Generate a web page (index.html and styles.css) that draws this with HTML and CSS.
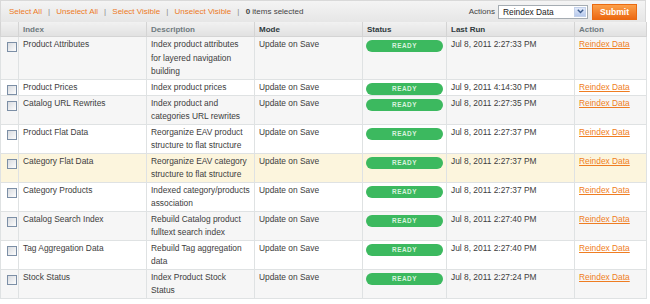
FILE: index.html
```html
<!DOCTYPE html>
<html lang="en">
<head>
  <meta charset="UTF-8">
  <title>Index Management</title>
  <link rel="stylesheet" href="styles.css">
</head>
<body>

  <div class="grid">

    <!-- MASSACTION BAR -->
    <div class="massaction">
      <div class="mass-links">
        <a href="#">Select All</a><span class="sep">|</span>
        <a href="#">Unselect All</a><span class="sep">|</span>
        <a href="#">Select Visible</a><span class="sep">|</span>
        <a href="#">Unselect Visible</a><span class="sep">|</span>
        <span class="count"><b>0</b> items selected</span>
      </div>
      <div class="mass-form">
        <span class="mass-label">Actions</span>
        <div class="select">
          <span>Reindex Data</span>
          <span class="select-arrow">
            <svg width="7" height="5" viewBox="0 0 7 5"><path d="M0.8 0.8 L3.5 3.6 L6.2 0.8" fill="none" stroke="#3a5a8c" stroke-width="1.4"/></svg>
          </span>
        </div>
        <button class="submit-btn" type="button">Submit</button>
      </div>
    </div>

    <!-- GRID TABLE -->
    <table class="data">
      <colgroup>
        <col class="c-check">
        <col class="c-index">
        <col class="c-desc">
        <col class="c-mode">
        <col class="c-status">
        <col class="c-run">
        <col class="c-action">
      </colgroup>
      <thead>
        <tr>
          <th></th>
          <th class="muted">Index</th>
          <th class="muted">Description</th>
          <th>Mode</th>
          <th>Status</th>
          <th>Last Run</th>
          <th class="muted">Action</th>
        </tr>
      </thead>
      <tbody>
        <tr class="even">
          <td><input type="checkbox" class="check"></td>
          <td>Product Attributes</td>
          <td>Index product attributes<br>for layered navigation building</td>
          <td>Update on Save</td>
          <td class="status-cell"><span class="status">READY</span></td>
          <td>Jul 8, 2011 2:27:33 PM</td>
          <td><a href="#" class="reindex">Reindex Data</a></td>
        </tr>
        <tr>
          <td><input type="checkbox" class="check"></td>
          <td>Product Prices</td>
          <td>Index product prices</td>
          <td>Update on Save</td>
          <td class="status-cell"><span class="status">READY</span></td>
          <td>Jul 9, 2011 4:14:30 PM</td>
          <td><a href="#" class="reindex">Reindex Data</a></td>
        </tr>
        <tr class="even">
          <td><input type="checkbox" class="check"></td>
          <td>Catalog URL Rewrites</td>
          <td>Index product and categories URL rewrites</td>
          <td>Update on Save</td>
          <td class="status-cell"><span class="status">READY</span></td>
          <td>Jul 8, 2011 2:27:35 PM</td>
          <td><a href="#" class="reindex">Reindex Data</a></td>
        </tr>
        <tr>
          <td><input type="checkbox" class="check"></td>
          <td>Product Flat Data</td>
          <td>Reorganize EAV product structure to flat structure</td>
          <td>Update on Save</td>
          <td class="status-cell"><span class="status">READY</span></td>
          <td>Jul 8, 2011 2:27:37 PM</td>
          <td><a href="#" class="reindex">Reindex Data</a></td>
        </tr>
        <tr class="hover">
          <td><input type="checkbox" class="check"></td>
          <td>Category Flat Data</td>
          <td>Reorganize EAV category structure to flat structure</td>
          <td>Update on Save</td>
          <td class="status-cell"><span class="status">READY</span></td>
          <td>Jul 8, 2011 2:27:37 PM</td>
          <td><a href="#" class="reindex">Reindex Data</a></td>
        </tr>
        <tr>
          <td><input type="checkbox" class="check"></td>
          <td>Category Products</td>
          <td>Indexed category/products association</td>
          <td>Update on Save</td>
          <td class="status-cell"><span class="status">READY</span></td>
          <td>Jul 8, 2011 2:27:37 PM</td>
          <td><a href="#" class="reindex">Reindex Data</a></td>
        </tr>
        <tr class="even">
          <td><input type="checkbox" class="check"></td>
          <td>Catalog Search Index</td>
          <td>Rebuild Catalog product fulltext search index</td>
          <td>Update on Save</td>
          <td class="status-cell"><span class="status">READY</span></td>
          <td>Jul 8, 2011 2:27:40 PM</td>
          <td><a href="#" class="reindex">Reindex Data</a></td>
        </tr>
        <tr>
          <td><input type="checkbox" class="check"></td>
          <td>Tag Aggregation Data</td>
          <td>Rebuild Tag aggregation data</td>
          <td>Update on Save</td>
          <td class="status-cell"><span class="status">READY</span></td>
          <td>Jul 8, 2011 2:27:40 PM</td>
          <td><a href="#" class="reindex">Reindex Data</a></td>
        </tr>
        <tr class="even">
          <td><input type="checkbox" class="check"></td>
          <td>Stock Status</td>
          <td>Index Product Stock Status</td>
          <td>Update on Save</td>
          <td class="status-cell"><span class="status">READY</span></td>
          <td>Jul 8, 2011 2:27:24 PM</td>
          <td><a href="#" class="reindex">Reindex Data</a></td>
        </tr>
      </tbody>
    </table>

  </div>

</body>
</html>
```

FILE: styles.css
```css
body {
  margin: 0;
  font-family: 'Liberation Sans', Arial, Helvetica, sans-serif;
  font-size: 8.4px;
  color: #3d3d3d;
  background-color: #fff;
}

.grid {
  width: 646px;
}

/* massaction bar */
.massaction {
  display: flex;
  align-items: center;
  justify-content: space-between;
  height: 21px;
  padding: 0 8px 0 8px;
  border: 1px solid #d9d9d9;
  border-bottom: none;
  background: linear-gradient(#f4f4f4, #e6e6e6);
  font-size: 8px;
}

.mass-links a {
  color: #ec7a1f;
  text-decoration: none;
}

.sep {
  color: #8a8a8a;
  margin: 0 4px 0 6px;
}

.count {
  color: #444;
}

.mass-form {
  display: flex;
  align-items: center;
}

.mass-label {
  color: #444;
  margin-right: 3px;
}

.select {
  box-sizing: border-box;
  width: 90px;
  height: 14px;
  display: flex;
  align-items: center;
  justify-content: space-between;
  padding: 0 1px 0 4px;
  border: 1px solid #a5acb2;
  background-color: #fff;
  font-size: 8.4px;
  color: #222;
}

.select-arrow {
  width: 12px;
  height: 10px;
  display: flex;
  align-items: center;
  justify-content: center;
  background: linear-gradient(#e2eafa, #b6c9ec);
  border: 1px solid #c3d1ea;
  box-sizing: border-box;
}

.submit-btn {
  width: 45px;
  height: 16px;
  margin-left: 4px;
  padding: 0;
  border: 1px solid #ea6a10;
  background: linear-gradient(#fca04a, #ec6812);
  color: #fff;
  font-family: inherit;
  font-size: 8.6px;
  font-weight: bold;
}

/* table */
.data {
  width: 646px;
  border-collapse: collapse;
  table-layout: fixed;
}

.c-check { width: 18px; }
.c-index { width: 128px; }
.c-desc { width: 108px; }
.c-mode { width: 108px; }
.c-status { width: 84px; }
.c-run { width: 128px; }
.c-action { width: 72px; }

.data th {
  height: 14px;
  padding: 0 4px;
  text-align: left;
  font-size: 8px;
  font-weight: bold;
  color: #2f3a40;
  background: linear-gradient(#f1f1f1, #e1e1e1);
  border: 1px solid #d4d4d4;
  border-top: none;
}

.data th.muted {
  color: #6f7a80;
}

.data td {
  padding: 1px 3px 0 4px;
  line-height: 13.5px;
  vertical-align: top;
  border: 1px solid #dfe2e3;
  border-top: none;
}

.data tr.even td {
  background-color: #f6f6f6;
}

.data tr.hover td {
  background-color: #fcf5dd;
}

.check {
  appearance: none;
  display: block;
  width: 10px;
  height: 10px;
  margin: 4px 0 0 2px;
  border: 1px solid #7c8fa6;
  background: linear-gradient(135deg, #d8dbe0, #fdfdfd);
}

.data td.status-cell {
  padding-left: 3px;
  padding-right: 3px;
}

.status {
  display: block;
  height: 12px;
  margin-top: 2px;
  line-height: 12px;
  border-radius: 6px;
  background-color: #3cb95f;
  color: #d8f2de;
  font-size: 6.4px;
  font-weight: bold;
  letter-spacing: 0.5px;
  text-align: center;
}

.reindex {
  color: #ef7d22;
  text-decoration: underline;
}
```
